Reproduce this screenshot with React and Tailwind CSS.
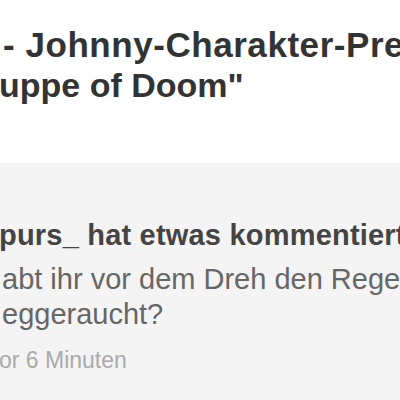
import React from 'react';

const App = () => {
  return (
    <div className="w-[400px] h-[400px] overflow-hidden bg-white flex flex-col font-['Liberation_Sans',Arial,sans-serif]">
      {/* Titel */}
      <div className="h-[163px] pt-[24px] shrink-0">
        <div className="whitespace-nowrap text-[35px] leading-[41px] font-bold text-[#333] pl-[3px] tracking-[0.55px]">
          - Johnny-Charakter-Preview
        </div>
        <div className="whitespace-nowrap text-[34px] leading-[41px] font-bold text-[#333] -ml-[1px]">
          uppe of Doom"
        </div>
      </div>

      {/* Kommentar */}
      <div className="flex-1 bg-[#f4f4f4] pt-[55px]">
        <div className="whitespace-nowrap text-[29px] leading-[34px] font-bold text-[#444] -ml-[1px] tracking-[0.2px]">
          purs_ hat etwas kommentiert
        </div>
        <div className="mt-[10px] text-[29px] leading-[35px] text-[#666] whitespace-nowrap pl-[2px]">
          <div>abt ihr vor dem Dreh den Regen</div>
          <div>eggeraucht?</div>
        </div>
        <div className="mt-[14px] whitespace-nowrap text-[23px] leading-[28px] text-[#aaa] -ml-[1px]">
          or 6 Minuten
        </div>
      </div>
    </div>
  );
};

export default App;
